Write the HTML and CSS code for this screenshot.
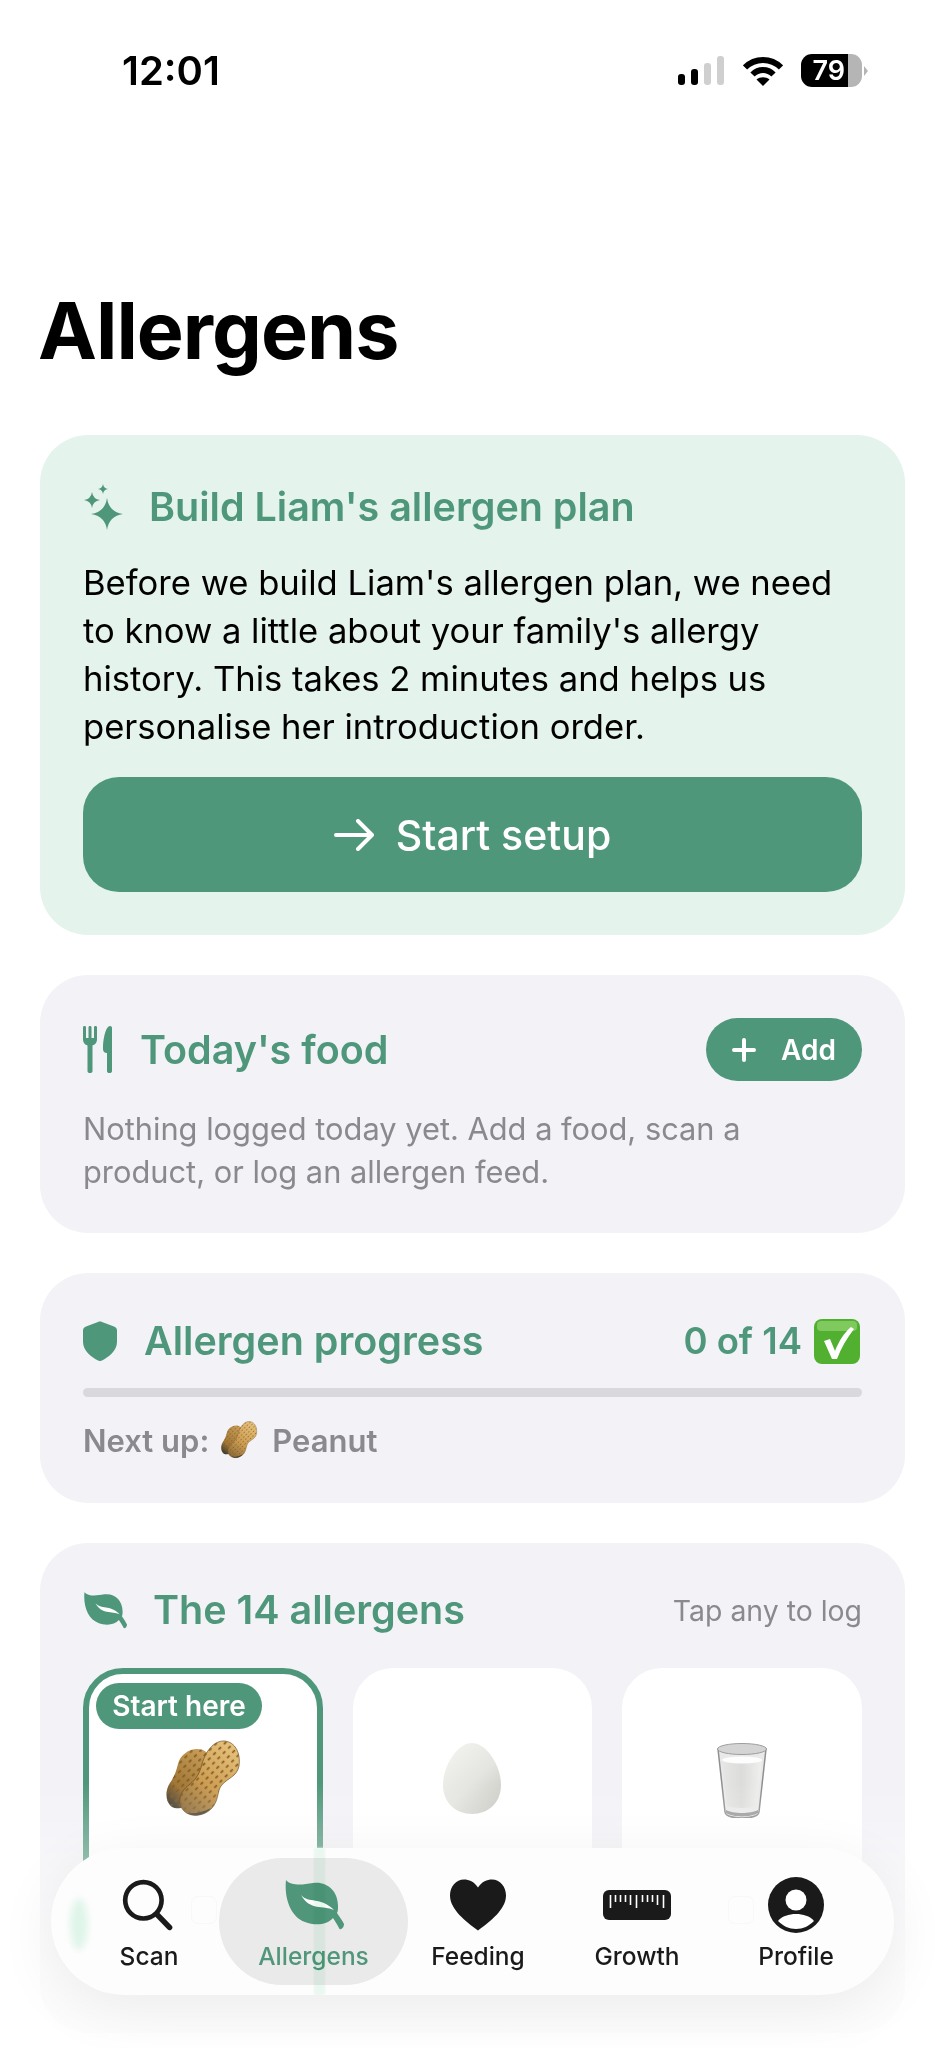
FILE: index.html
```html
<!DOCTYPE html>
<html>
	<head>
		<meta name="viewport" content="width=device-width, initial-scale=1.0" />
		<title>Allergens</title>
		<link rel="stylesheet" href="styles.css">
	</head>
	<body>
		<svg class="defs" width="0" height="0">
			<defs>
				<linearGradient id="nutFront" x1="0.8" y1="0" x2="0.2" y2="1">
					<stop offset="0" stop-color="#e6c27c" />
					<stop offset="0.6" stop-color="#cb9c52" />
					<stop offset="1" stop-color="#8a6a38" />
				</linearGradient>
				<linearGradient id="nutBack" x1="0.8" y1="0" x2="0.2" y2="1">
					<stop offset="0" stop-color="#c79d58" />
					<stop offset="0.7" stop-color="#a07636" />
					<stop offset="1" stop-color="#3f3a30" />
				</linearGradient>
				<pattern id="nutDimples" width="7.500" height="6" patternUnits="userSpaceOnUse" patternTransform="rotate(-45)">
					<rect x="1" y="1.800" width="3.800" height="1.700" rx="0.800" fill="#85591f" />
				</pattern>
				<linearGradient id="eggShade" x1="0.1" y1="0" x2="0.9" y2="1">
					<stop offset="0" stop-color="#f4f4f1" />
					<stop offset="0.55" stop-color="#e4e4e0" />
					<stop offset="1" stop-color="#c9c8c2" />
				</linearGradient>
				<linearGradient id="milkShade" x1="0" y1="0" x2="1" y2="0">
					<stop offset="0" stop-color="#e6e6e4" />
					<stop offset="0.5" stop-color="#dcdcda" />
					<stop offset="1" stop-color="#f0f0ee" />
				</linearGradient>
				<symbol id="peanut" viewBox="0 0 76 78">
					<path d="M32 9C40 9 46 14 44 22C40 34 30 45 28 55C24 66 14 71 7 67C0 62 0 50 5 43C9 37 11 32 13 24C15 15 24 9 32 9Z" fill="url(#nutBack)" />
					<path d="M32 9C40 9 46 14 44 22C40 34 30 45 28 55C24 66 14 71 7 67C0 62 0 50 5 43C9 37 11 32 13 24C15 15 24 9 32 9Z" fill="url(#nutDimples)" />
					<path d="M60 1C70 2 76 13 74 26C72 37 62 38 56 46C52 52 54 60 47 68C40 76 26 78 19 71C12 64 14 52 24 45C32 39 35 32 37 24C40 13 48 0 60 1Z" fill="url(#nutFront)" stroke="#5c3f16" stroke-opacity="0.6" />
					<path d="M60 1C70 2 76 13 74 26C72 37 62 38 56 46C52 52 54 60 47 68C40 76 26 78 19 71C12 64 14 52 24 45C32 39 35 32 37 24C40 13 48 0 60 1Z" fill="url(#nutDimples)" />
					<path d="M22 73C30 78 40 75 46 68C39 72 30 74 22 73Z" fill="#4a4030" />
				</symbol>
				<symbol id="leaf" viewBox="0 0 60 50">
					<path d="M2 0C7 6 18 5 29 3C43 1 54 11 54 26C54 29 54 31 53 33C55 36 58 40 60 44C60 48 56 51 55 48C53 44 51 41 49 38C43 45 31 46 21 42C7 37 0 19 2 0Z" fill="currentColor" />
					<path d="M17 15C25 24 36 16 50 30C39 25 26 31 17 15Z" fill="#fff" />
				</symbol>
			</defs>
		</svg>

		<div class="status-bar">
			<span class="status-time">12:01</span>
			<div class="status-icons">
				<div class="signal">
					<span class="signal-bar bar-1"></span>
					<span class="signal-bar bar-2"></span>
					<span class="signal-bar bar-3"></span>
					<span class="signal-bar bar-4"></span>
				</div>
				<svg class="wifi" viewBox="0 0 40 30">
					<path d="M2 11.500C12 1.500 28 1.500 38 11.500" fill="none" stroke="#000" stroke-width="6" />
					<path d="M9.500 18.500C15.500 12.500 24.500 12.500 30.500 18.500" fill="none" stroke="#000" stroke-width="6" />
					<path d="M13.500 23.500C17 20.500 23 20.500 26.500 23.500L20 30Z" fill="#000" />
				</svg>
				<div class="battery">
					<span class="battery-level">79</span>
					<span class="battery-rest"></span>
				</div>
				<span class="battery-nub"></span>
			</div>
		</div>

		<h1 class="page-title">Allergens</h1>

		<section class="card card-plan">
			<div class="card-head">
				<svg class="icon-sparkle" viewBox="0 0 40 46">
					<path d="M24 14Q26 28 40 30Q26 32 24 46Q22 32 8 30Q22 28 24 14Z" fill="currentColor" />
					<path d="M9 8Q10 15 17 16Q10 17 9 24Q8 17 1 16Q8 15 9 8Z" fill="currentColor" />
					<path d="M20 0Q20.700 4.300 25 5Q20.700 5.700 20 10Q19.300 5.700 15 5Q19.300 4.300 20 0Z" fill="currentColor" />
				</svg>
				<h2 class="card-title">Build Liam's allergen plan</h2>
			</div>
			<p class="plan-text">Before we build Liam's allergen plan, we need to know a little about your family's allergy history. This takes 2 minutes and helps us personalise her introduction order.</p>
			<button class="start-button">
				<svg class="icon-arrow" viewBox="0 0 40 32">
					<path d="M2 16H37M24 2L38 16L24 30" fill="none" stroke="currentColor" stroke-width="4" stroke-linecap="round" stroke-linejoin="round" />
				</svg>
				Start setup
			</button>
		</section>

		<section class="card card-food">
			<div class="card-head">
				<svg class="icon-food" viewBox="0 0 29 47">
					<path d="M1.500 0C2.500 0 3 .5 3 1.500V12H5.500V1.500C5.500 .5 6 0 7 0C8 0 8.500 .5 8.500 1.500V12H11V1.500C11 .5 11.500 0 12.500 0C13.500 0 14 .5 14 1.500V13C14 17 12 18.500 9.500 19.500V45C9.500 46.500 8.500 47 7 47C5.500 47 4.500 46.500 4.500 45V19.500C2 18.500 0 17 0 13V1.500C0 .5 .5 0 1.500 0Z" fill="currentColor" />
					<path d="M27 0C28.300 0 29 .7 29 2V45C29 46.500 28 47 26.500 47C25 47 24 46.500 24 45V27C21.500 27 20 25.500 20 23C20 12 23 0 27 0Z" fill="currentColor" />
				</svg>
				<h2 class="card-title">Today's food</h2>
				<button class="add-button">
					<svg class="icon-plus" viewBox="0 0 24 24">
						<path d="M12 2V22M2 12H22" fill="none" stroke="currentColor" stroke-width="4" stroke-linecap="round" />
					</svg>
					Add
				</button>
			</div>
			<p class="muted-text">Nothing logged today yet. Add a food, scan a product, or log an allergen feed.</p>
		</section>

		<section class="card card-progress">
			<div class="card-head">
				<svg class="icon-shield" viewBox="0 0 34 40">
					<path d="M15 1C16.300 .4 17.700 .4 19 1L31 5.500C33 6.300 34 7.500 34 9.500V21C34 30 25 36.500 19 39.500C17.700 40.200 16.300 40.200 15 39.500C9 36.500 0 30 0 21V9.500C0 7.500 1 6.300 3 5.500Z" fill="currentColor" />
				</svg>
				<h2 class="card-title">Allergen progress</h2>
				<span class="progress-count">
					0 of 14
					<svg class="icon-check" viewBox="0 0 46 45">
						<rect width="46" height="45" rx="8" fill="#52b030" />
						<rect x="3" y="2" width="40" height="10" rx="4" fill="#7fc95f" />
						<path d="M10 22L16 20L21 32C25 22 30 14 37 8L40 10C33 19 27 29 23 40H18Z" fill="#fff" />
					</svg>
				</span>
			</div>
			<div class="progress-track"></div>
			<div class="next-up">
				Next up:
				<svg class="icon-peanut-small"><use href="#peanut" /></svg>
				Peanut
			</div>
		</section>

		<section class="card card-list">
			<div class="card-head">
				<svg class="icon-leaf"><use href="#leaf" /></svg>
				<h2 class="card-title">The 14 allergens</h2>
				<span class="card-hint">Tap any to log</span>
			</div>
			<div class="allergen-grid">
				<div class="allergen-tile tile-next">
					<span class="tile-badge">Start here</span>
					<svg class="pic-peanut"><use href="#peanut" /></svg>
				</div>
				<div class="allergen-tile">
					<svg class="pic-egg" viewBox="0 0 58 71">
						<path d="M29 0C43 0 58 22 58 42C58 60 45 71 29 71C13 71 0 60 0 42C0 22 15 0 29 0Z" fill="url(#eggShade)" />
					</svg>
				</div>
				<div class="allergen-tile">
					<svg class="pic-glass" viewBox="0 0 50 75">
						<path d="M1 6L8 69C8.500 73 16 75 25 75C34 75 41.500 73 42 69L49 6Z" fill="#e9e9e9" stroke="#8f8f8f" stroke-width="1.500" />
						<ellipse cx="25" cy="6" rx="24.500" ry="5.500" fill="#d4d4d4" stroke="#9d9d9d" stroke-width="1" />
						<path d="M5 17C14 14 36 14 45 17L40 63C32 65.500 18 65.500 10 63Z" fill="url(#milkShade)" />
						<ellipse cx="25" cy="17" rx="20" ry="3.500" fill="#fdfdfd" />
						<path d="M9 67C16 71 34 71 41 67L41 70C34 74.500 16 74.500 9 70Z" fill="#9a9a9a" />
					</svg>
				</div>
			</div>
		</section>

		<div class="bottom-fade"></div>

		<nav class="tab-bar">
			<span class="glass-blob"></span>
			<span class="glass-stripe"></span>
			<span class="glass-ghost ghost-1"></span>
			<span class="glass-ghost ghost-2"></span>
			<a class="tab tab-scan">
				<svg class="tab-icon" width="60" height="60" viewBox="0 0 60 60">
					<circle cx="24" cy="25" r="19.500" fill="none" stroke="#1a1a1a" stroke-width="5" />
					<path d="M38.500 40L52 54" fill="none" stroke="#1a1a1a" stroke-width="6" stroke-linecap="round" />
				</svg>
				<span>Scan</span>
			</a>
			<a class="tab tab-active">
				<svg class="tab-icon" width="60" height="50"><use href="#leaf" /></svg>
				<span>Allergens</span>
			</a>
			<a class="tab tab-feeding">
				<svg class="tab-icon" width="56" height="51" viewBox="0 0 56 51">
					<path d="M28 8C32 2 37 0 42 0C50 0 56 7 56 16C56 30 40 42 28 51C16 42 0 30 0 16C0 7 6 0 14 0C19 0 24 2 28 8Z" fill="#1a1a1a" />
				</svg>
				<span>Feeding</span>
			</a>
			<a class="tab tab-growth">
				<svg class="tab-icon" width="68" height="30" viewBox="0 0 68 30">
					<rect width="68" height="30" rx="6" fill="#1a1a1a" />
					<path d="M7.500 5V18M12.500 5V12M17.500 5V12M22.500 5V12M27.500 5V15M33.500 5V18M39.500 5V12M44.500 5V12M49.500 5V12M54.500 5V15M60.500 5V18" fill="none" stroke="#fff" stroke-width="1.600" />
				</svg>
				<span>Growth</span>
			</a>
			<a class="tab tab-profile">
				<svg class="tab-icon" width="56" height="56" viewBox="0 0 56 56">
					<circle cx="28" cy="28" r="28" fill="#1a1a1a" />
					<circle cx="28" cy="23" r="10.500" fill="#fff" />
					<path d="M10 44C14 39 21 37 28 37C35 37 42 39 46 44C41 49 35 52 28 52C21 52 15 49 10 44Z" fill="#fff" />
				</svg>
				<span>Profile</span>
			</a>
		</nav>
	</body>
</html>
```

FILE: styles.css
```css
* {
	box-sizing: border-box;
}

body {
	position: relative;
	width: 945px;
	height: 2048px;
	margin: 0;
	padding: 0 40px;
	overflow: hidden;
	font-family: Inter, "Liberation Sans", sans-serif;
	background-color: #fff;
	color: #000;
}

.defs {
	position: absolute;
}

/* Status bar */
.status-bar {
	display: flex;
	justify-content: space-between;
	align-items: center;
	height: 33px;
	margin: 54px 0 0;
	padding: 0 0 0 82px;
}

.status-time {
	font-size: 40px;
	font-weight: 600;
}

.status-icons {
	display: flex;
	align-items: center;
}

.signal {
	display: flex;
	align-items: flex-end;
	gap: 6px;
	height: 29px;
	margin-right: 19px;
}

.signal-bar {
	width: 7px;
	border-radius: 3px;
	background-color: #000;
}

.bar-1 {
	height: 11px;
}

.bar-2 {
	height: 16px;
}

.bar-3 {
	height: 22px;
	background-color: #cfcfcf;
}

.bar-4 {
	height: 29px;
	background-color: #cfcfcf;
}

.wifi {
	width: 40px;
	height: 30px;
	margin-right: 18px;
}

.battery {
	display: flex;
	width: 61px;
	height: 33px;
	border-radius: 11px;
	overflow: hidden;
}

.battery-level {
	width: 47px;
	background-color: #000;
	color: #fff;
	font-size: 27px;
	font-weight: 600;
	line-height: 33px;
	text-align: right;
	padding-right: 3px;
}

.battery-rest {
	flex: 1;
	background-color: #b5b5b5;
}

.battery-nub {
	width: 0;
	height: 0;
	margin-left: 2px;
	margin-right: 37px;
	border-left: 4px solid #b5b5b5;
	border-top: 5px solid transparent;
	border-bottom: 5px solid transparent;
}

.page-title {
	margin: 194px 0 0 -2px;
	font-size: 79px;
	font-weight: 700;
	line-height: 99px;
	letter-spacing: -1px;
}

/* Cards */
.card {
	margin-top: 40px;
	padding: 43px;
	border-radius: 48px;
	background-color: #f2f2f7;
}

.card-plan {
	margin-top: 55px;
	padding-top: 48px;
	background-color: #e4f3ec;
}

.card-head {
	display: flex;
	align-items: center;
	color: #4f977b;
}

.card-title {
	margin: 0;
	font-size: 39.500px;
	font-weight: 600;
	line-height: 48px;
}

.plan-text {
	margin: 27px 0 0;
	font-size: 34.600px;
	line-height: 48px;
}

.start-button {
	display: flex;
	align-items: center;
	justify-content: center;
	gap: 22px;
	width: 100%;
	height: 115px;
	margin-top: 27px;
	padding-left: 6px;
	border: none;
	border-radius: 36px;
	background-color: #4f977b;
	color: #fff;
	font-family: inherit;
	font-size: 41px;
	font-weight: 500;
}

.icon-sparkle {
	width: 40px;
	height: 46px;
	margin-right: 26px;
}

.icon-arrow {
	width: 40px;
	height: 32px;
}

.icon-food {
	width: 29px;
	height: 47px;
	margin-right: 28px;
}

.card-food {
	padding-bottom: 40px;
}

.add-button {
	display: flex;
	align-items: center;
	gap: 25px;
	height: 63px;
	margin-left: auto;
	padding: 0 26px;
	border: none;
	border-radius: 32px;
	background-color: #4f977b;
	color: #fff;
	font-family: inherit;
	font-size: 28px;
	font-weight: 600;
}

.icon-plus {
	width: 24px;
	height: 24px;
}

.muted-text {
	margin: 26px 0 0;
	color: #8a8a8e;
	font-size: 30.800px;
	line-height: 43px;
}

.card-progress {
	padding-top: 44px;
	padding-bottom: 44px;
}

.icon-shield {
	width: 34px;
	height: 40px;
	margin-right: 27px;
}

.progress-count {
	display: flex;
	align-items: center;
	gap: 12px;
	margin-left: auto;
	font-size: 36.500px;
	font-weight: 600;
}

.icon-check {
	width: 46px;
	height: 45px;
	margin-right: 2px;
}

.progress-track {
	height: 9px;
	margin-top: 23px;
	border-radius: 5px;
	background-color: #d8d8dd;
}

.next-up {
	display: flex;
	align-items: center;
	gap: 11px;
	margin-top: 24px;
	color: #8a8a8e;
	font-size: 31px;
	font-weight: 600;
}

.icon-peanut-small {
	width: 38px;
	height: 38px;
	margin-right: 3px;
}

.card-list {
	padding-top: 43px;
}

.icon-leaf {
	width: 44px;
	height: 37px;
	margin-right: 26px;
}

.card-hint {
	margin-left: auto;
	color: #8a8a8e;
	font-size: 28.400px;
}

.allergen-grid {
	display: grid;
	grid-template-columns: repeat(3, 1fr);
	gap: 30px;
	margin-top: 34px;
}

.allergen-tile {
	position: relative;
	display: flex;
	justify-content: center;
	height: 322px;
	padding-top: 75px;
	border-radius: 40px;
	background-color: #fff;
}

.tile-next {
	padding-top: 66px;
	border: 6px solid #4f977b;
}

.tile-badge {
	position: absolute;
	top: 9px;
	left: 7px;
	width: 166px;
	height: 46px;
	border-radius: 23px;
	background-color: #4f977b;
	color: #fff;
	font-size: 28px;
	font-weight: 600;
	line-height: 46px;
	text-align: center;
}

.pic-peanut {
	width: 76px;
	height: 78px;
}

.pic-egg {
	width: 58px;
	height: 71px;
}

.pic-glass {
	width: 50px;
	height: 75px;
}

/* Fade and floating tab bar */
.bottom-fade {
	position: absolute;
	left: 0;
	right: 0;
	bottom: 0;
	height: 265px;
	background: linear-gradient(to bottom, rgba(255, 255, 255, 0), rgba(255, 255, 255, 0.8) 60%, rgba(255, 255, 255, 0.85));
}

.tab-bar {
	position: absolute;
	left: 51px;
	top: 1848px;
	display: flex;
	width: 843px;
	height: 147px;
	padding: 10px 0 10px 28px;
	border-radius: 74px;
	background-color: #fdfdfd;
	box-shadow: 0 14px 60px rgba(0, 0, 0, 0.07);
}

.glass-blob {
	position: absolute;
	left: 19px;
	top: 50px;
	width: 18px;
	height: 52px;
	border-radius: 50%;
	background-color: #e0f5ea;
	filter: blur(3px);
}

.glass-stripe {
	position: absolute;
	left: 263px;
	top: 0;
	bottom: 0;
	width: 11px;
	background-color: #ebf8f1;
	filter: blur(1px);
}

.glass-ghost {
	position: absolute;
	top: 48px;
	width: 26px;
	height: 28px;
	border-radius: 7px;
	border: 1px solid #f8f8f8;
}

.ghost-1 {
	left: 140px;
}

.ghost-2 {
	left: 677px;
}

.tab {
	position: relative;
	display: flex;
	flex-direction: column;
	align-items: center;
	width: 140px;
	color: #1a1a1a;
	font-size: 24.500px;
	font-weight: 500;
}

.tab-icon {
	flex: none;
	height: 56px;
	margin-top: 19px;
	margin-bottom: 8px;
}

.tab span {
	line-height: 30px;
}

.tab-active {
	width: 189px;
	border-radius: 64px;
	background-color: #ececec;
	color: #4f977b;
	mix-blend-mode: multiply;
}

.tab-growth,
.tab-profile {
	margin-left: 19px;
}
```
